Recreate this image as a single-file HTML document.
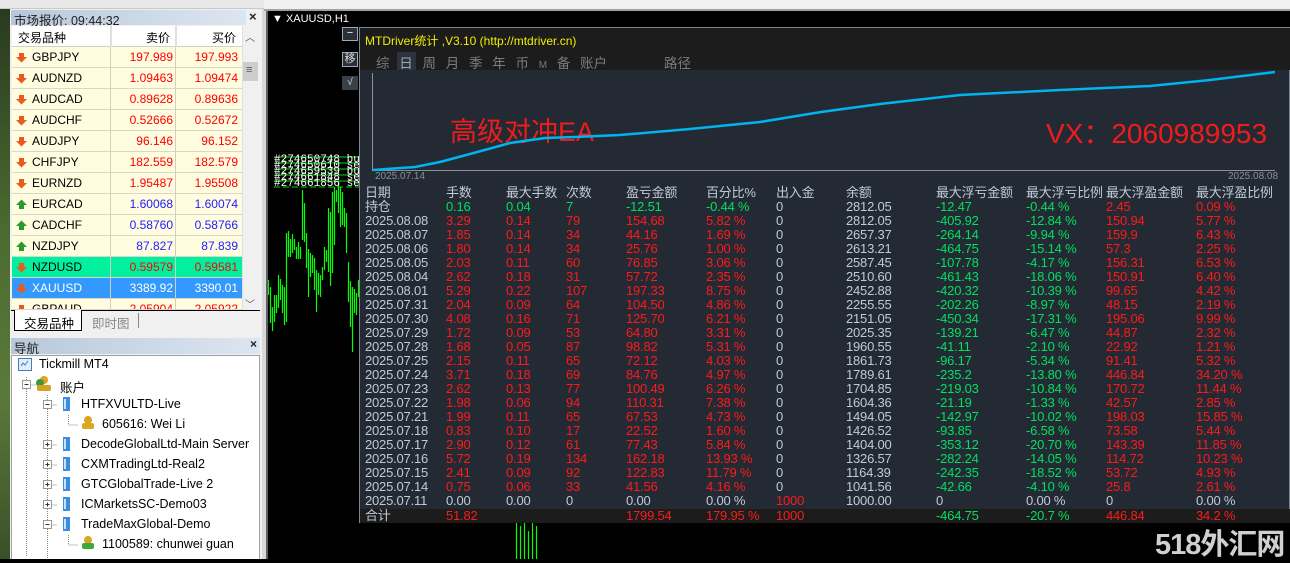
<!DOCTYPE html>
<html><head><meta charset="utf-8">
<style>
*{margin:0;padding:0;box-sizing:border-box}
body{width:1290px;height:559px;overflow:hidden;background:#000;font-family:"Liberation Sans","Noto Sans CJK SC",sans-serif;position:relative}
.a{position:absolute;white-space:nowrap}
.lp{position:absolute;left:0;top:0;width:264px;height:559px;background:#f0f0f0}
.mw{font-size:12px;color:#000}
.row{position:absolute;left:12px;width:230px;height:21px;background:#fffce0;border-bottom:1px solid #d8d8c8}
.row .n{position:absolute;left:20px;top:3px}
.row .b{position:absolute;right:69px;top:3px;color:#f00}
.row .k{position:absolute;right:4px;top:3px;color:#f00}
.row.u .b,.row.u .k{color:#2020ff}
.ar{position:absolute;left:4px;top:5px;width:11px;height:11px}
.vl{position:absolute;top:0;width:1px;height:21px;background:#d0d0c0}
.tr{font-size:12.5px;color:#000}
.pn{position:absolute;left:359px;top:27px;width:931px;height:496px;border:1px solid #7c8594;background:#232a33;font-size:13px;color:#c0cad8}
.pn .r{position:absolute;left:0;width:930px;height:14px;line-height:14px}
.pn .r span{position:absolute;top:0;letter-spacing:-0.2px}
.g{color:#00e060}.d{color:#ff1a1a}.w{color:#c0cad8}
.c1{left:5px}.c2{left:86px}.c3{left:146px}.c4{left:206px}.c5{left:266px}.c6{left:346px}.c7{left:416px}.c8{left:486px}.c9{left:576px}.c10{left:666px}.c11{left:746px}.c12{left:836px}
</style></head><body>

<!-- left panel -->
<div class="lp">
  <div class="a" style="left:0;top:0;width:264px;height:9px;background:#e8e8e8;border-bottom:1px solid #c8c8c8"></div>
  <div class="a" style="left:0;top:9px;width:10px;height:550px;background:linear-gradient(#2a3a20,#4a6a30 40%,#5a7a3a 70%,#3a5028)"></div>
  <!-- market watch title -->
  <div class="a" style="left:11px;top:10px;width:235px;height:15px;background:linear-gradient(90deg,#b8c8da,#dce6f0)"></div>
  <div class="a mw" style="left:14px;top:10px;font-size:12.5px;color:#222">市场报价: 09:44:32</div>
  <div class="a" style="left:249px;top:9px;font-size:13px;font-weight:bold;color:#222">×</div>
  <!-- header -->
  <div class="a" style="left:12px;top:26px;width:230px;height:21px;background:#fff;border-bottom:1px solid #d0d0d0"></div>
  <div class="a" style="left:110px;top:26px;width:2px;height:21px;background:#e0e0e0"></div>
  <div class="a" style="left:175px;top:26px;width:2px;height:21px;background:#e0e0e0"></div>
  <div class="a mw" style="left:18px;top:29px">交易品种</div>
  <div class="a mw" style="left:146px;top:29px">卖价</div>
  <div class="a mw" style="left:212px;top:29px">买价</div>
  <!-- rows -->
  <div class="mw">
  <div class="row" style="top:47px"><svg class="ar" viewBox="0 0 11 11"><path d="M3 1h5v4h3l-5.5 5.5L0 5h3z" fill="#e85a20"/></svg><span class="n">GBPJPY</span><span class="b">197.989</span><span class="k">197.993</span><i class="vl" style="left:98px"></i><i class="vl" style="left:163px"></i></div>
  <div class="row" style="top:68px"><svg class="ar" viewBox="0 0 11 11"><path d="M3 1h5v4h3l-5.5 5.5L0 5h3z" fill="#e85a20"/></svg><span class="n">AUDNZD</span><span class="b">1.09463</span><span class="k">1.09474</span><i class="vl" style="left:98px"></i><i class="vl" style="left:163px"></i></div>
  <div class="row" style="top:89px"><svg class="ar" viewBox="0 0 11 11"><path d="M3 1h5v4h3l-5.5 5.5L0 5h3z" fill="#e85a20"/></svg><span class="n">AUDCAD</span><span class="b">0.89628</span><span class="k">0.89636</span><i class="vl" style="left:98px"></i><i class="vl" style="left:163px"></i></div>
  <div class="row" style="top:110px"><svg class="ar" viewBox="0 0 11 11"><path d="M3 1h5v4h3l-5.5 5.5L0 5h3z" fill="#e85a20"/></svg><span class="n">AUDCHF</span><span class="b">0.52666</span><span class="k">0.52672</span><i class="vl" style="left:98px"></i><i class="vl" style="left:163px"></i></div>
  <div class="row" style="top:131px"><svg class="ar" viewBox="0 0 11 11"><path d="M3 1h5v4h3l-5.5 5.5L0 5h3z" fill="#e85a20"/></svg><span class="n">AUDJPY</span><span class="b">96.146</span><span class="k">96.152</span><i class="vl" style="left:98px"></i><i class="vl" style="left:163px"></i></div>
  <div class="row" style="top:152px"><svg class="ar" viewBox="0 0 11 11"><path d="M3 1h5v4h3l-5.5 5.5L0 5h3z" fill="#e85a20"/></svg><span class="n">CHFJPY</span><span class="b">182.559</span><span class="k">182.579</span><i class="vl" style="left:98px"></i><i class="vl" style="left:163px"></i></div>
  <div class="row" style="top:173px"><svg class="ar" viewBox="0 0 11 11"><path d="M3 1h5v4h3l-5.5 5.5L0 5h3z" fill="#e85a20"/></svg><span class="n">EURNZD</span><span class="b">1.95487</span><span class="k">1.95508</span><i class="vl" style="left:98px"></i><i class="vl" style="left:163px"></i></div>
  <div class="row u" style="top:194px"><svg class="ar" viewBox="0 0 11 11"><path d="M3 10h5V6h3L5.5 0.5 0 6h3z" fill="#2a9a2a"/></svg><span class="n">EURCAD</span><span class="b">1.60068</span><span class="k">1.60074</span><i class="vl" style="left:98px"></i><i class="vl" style="left:163px"></i></div>
  <div class="row u" style="top:215px"><svg class="ar" viewBox="0 0 11 11"><path d="M3 10h5V6h3L5.5 0.5 0 6h3z" fill="#2a9a2a"/></svg><span class="n">CADCHF</span><span class="b">0.58760</span><span class="k">0.58766</span><i class="vl" style="left:98px"></i><i class="vl" style="left:163px"></i></div>
  <div class="row u" style="top:236px"><svg class="ar" viewBox="0 0 11 11"><path d="M3 10h5V6h3L5.5 0.5 0 6h3z" fill="#2a9a2a"/></svg><span class="n">NZDJPY</span><span class="b">87.827</span><span class="k">87.839</span><i class="vl" style="left:98px"></i><i class="vl" style="left:163px"></i></div>
  <div class="row" style="top:257px;background:#00f0a0"><svg class="ar" viewBox="0 0 11 11"><path d="M3 1h5v4h3l-5.5 5.5L0 5h3z" fill="#e85a20"/></svg><span class="n">NZDUSD</span><span class="b">0.59579</span><span class="k">0.59581</span><i class="vl" style="left:98px"></i><i class="vl" style="left:163px"></i></div>
  <div class="row" style="top:278px;background:#3399ff"><svg class="ar" viewBox="0 0 11 11"><path d="M3 1h5v4h3l-5.5 5.5L0 5h3z" fill="#e85a20"/></svg><span class="n" style="color:#fff">XAUUSD</span><span class="b" style="color:#fff">3389.92</span><span class="k" style="color:#fff">3390.01</span><i class="vl" style="left:98px"></i><i class="vl" style="left:163px"></i></div>
  <div class="row" style="top:299px;height:11px;overflow:hidden"><svg class="ar" viewBox="0 0 11 11"><path d="M3 1h5v4h3l-5.5 5.5L0 5h3z" fill="#e85a20"/></svg><span class="n">GBPAUD</span><span class="b">2.05904</span><span class="k">2.05922</span><i class="vl" style="left:98px"></i><i class="vl" style="left:163px"></i></div>
  </div>
  <!-- scrollbar -->
  <div class="a" style="left:242px;top:26px;width:17px;height:284px;background:#f0f0f0;border-left:1px solid #e0e0e0"></div>
  <div class="a" style="left:245px;top:29px;font-size:10px;color:#555">︿</div>
  <div class="a" style="left:243px;top:62px;width:15px;height:19px;background:#cdcdcd"></div>
  <div class="a" style="left:246px;top:64px;font-size:11px;color:#555">≡</div>
  <div class="a" style="left:245px;top:296px;font-size:10px;color:#555">﹀</div>
  <!-- tabs -->
  <div class="a" style="left:11px;top:310px;width:249px;height:24px;background:#f0f0f0;border-top:1px solid #000"></div>
  <div class="a" style="left:14px;top:310px;width:68px;height:21px;background:#fff;border:1px solid #000;border-top:none"></div>
  <div class="a tr" style="left:24px;top:313px">交易品种</div>
  <div class="a tr" style="left:92px;top:313px;color:#888">即时图</div>
  <div class="a" style="left:138px;top:313px;width:1px;height:15px;background:#888"></div>
  <!-- navigator -->
  <div class="a" style="left:11px;top:338px;width:249px;height:16px;background:linear-gradient(90deg,#b8c8da,#dce6f0)"></div>
  <div class="a tr" style="left:14px;top:338px;color:#222">导航</div>
  <div class="a" style="left:250px;top:337px;font-size:12px;font-weight:bold;color:#222">×</div>
  <div class="a" style="left:11px;top:355px;width:249px;height:204px;background:#fff;border:1px solid #a0a0a0;border-bottom:none"></div>
  <svg class="a" style="left:11px;top:355px" width="250" height="204">
    <g stroke="#888" stroke-dasharray="1 1" fill="none">
      <path d="M15.5 22v180M15.5 30h10M36.5 40v170M36.5 50h10M36.5 90h10M36.5 110h10M36.5 130h10M36.5 150h10M36.5 170h10M57.5 60v10h10M57.5 180v10h10"/>
    </g>
    <g fill="#fff" stroke="#999"><rect x="11.5" y="25.5" width="8" height="8"/><rect x="32.5" y="45.5" width="8" height="8"/><rect x="32.5" y="85.5" width="8" height="8"/><rect x="32.5" y="105.5" width="8" height="8"/><rect x="32.5" y="125.5" width="8" height="8"/><rect x="32.5" y="145.5" width="8" height="8"/><rect x="32.5" y="165.5" width="8" height="8"/></g>
    <g stroke="#333"><path d="M13.5 29.5h4M34.5 49.5h4M34.5 169.5h4M34.5 89.5h4M36.5 87.5v4M34.5 109.5h4M36.5 107.5v4M34.5 129.5h4M36.5 127.5v4M34.5 149.5h4M36.5 147.5v4"/></g>
    <!-- tickmill icon -->
    <rect x="7.5" y="3.5" width="13" height="12" fill="#dfeefc" stroke="#4a7ab8"/><path d="M10 11l2-3 2 2 3-4" stroke="#4a7ab8" fill="none"/>
    <!-- accounts icon -->
    <circle cx="33" cy="25" r="4" fill="#e0a020"/><circle cx="29" cy="28" r="4" fill="#3a9a3a"/><rect x="26" y="30" width="14" height="6" rx="2" fill="#d8a020"/>
    <!-- servers -->
    <g fill="#3a8ee0"><rect x="52" y="42" width="7" height="14"/><rect x="52" y="82" width="7" height="14"/><rect x="52" y="102" width="7" height="14"/><rect x="52" y="122" width="7" height="14"/><rect x="52" y="142" width="7" height="14"/><rect x="52" y="162" width="7" height="14"/></g>
    <g fill="#c9e4ff"><rect x="53" y="44" width="2" height="10"/><rect x="53" y="84" width="2" height="10"/><rect x="53" y="104" width="2" height="10"/><rect x="53" y="124" width="2" height="10"/><rect x="53" y="144" width="2" height="10"/><rect x="53" y="164" width="2" height="10"/></g>
    <circle cx="77" cy="65" r="4" fill="#d8a820"/><rect x="71" y="68" width="12" height="6" rx="2" fill="#d8a820"/>
    <circle cx="77" cy="185" r="4" fill="#d8a820"/><rect x="71" y="188" width="12" height="6" rx="2" fill="#3aaa3a"/>
  </svg>
  <div class="tr">
  <div class="a" style="left:39px;top:357px">Tickmill MT4</div>
  <div class="a" style="left:60px;top:377px">账户</div>
  <div class="a" style="left:81px;top:397px">HTFXVULTD-Live</div>
  <div class="a" style="left:102px;top:417px">605616: Wei Li</div>
  <div class="a" style="left:81px;top:437px">DecodeGlobalLtd-Main Server</div>
  <div class="a" style="left:81px;top:457px">CXMTradingLtd-Real2</div>
  <div class="a" style="left:81px;top:477px">GTCGlobalTrade-Live 2</div>
  <div class="a" style="left:81px;top:497px">ICMarketsSC-Demo03</div>
  <div class="a" style="left:81px;top:517px">TradeMaxGlobal-Demo</div>
  <div class="a" style="left:102px;top:537px">1100589: chunwei guan</div>
  </div>
</div>
<div class="a" style="left:262px;top:9px;width:4px;height:550px;background:#d8d8d8"></div>
<div class="a" style="left:266px;top:9px;width:2px;height:550px;background:#606060"></div>
<div class="a" style="left:264px;top:9px;width:1026px;height:2px;background:#a0a0a0"></div>
<div class="a" style="left:264px;top:0;width:1026px;height:9px;background:#f0f0f0"></div>

<!-- chart -->
<svg class="a" style="left:268px;top:11px" width="1022" height="548">
  <g stroke="#00ff00" stroke-width="1.2">
  <path d="M0.5 269v15M2.5 276v36M4.5 296v24M6.5 284v27M8.5 284v18M10.5 264v33M12.5 268v21M14.5 274v28M16.5 276v38M18.5 222v89M20.5 220v26M22.5 228v18M24.5 223v19M26.5 228v11M28.5 236v12M30.5 231v17M32.5 236v12M34.5 179v50M36.5 192v39M38.5 222v35M40.5 238v48M42.5 242v24M44.5 244v18M46.5 247v32M48.5 259v42M50.5 262v22M52.5 264v22M54.5 256v13M56.5 236v23M58.5 239v12M60.5 197v64M62.5 201v74M64.5 181v81M66.5 176v58M68.5 179v12M70.5 172v30M72.5 176v40M74.5 181v33M76.5 197v19M78.5 202v40M80.5 251v40M82.5 270v46M84.5 276v65M86.5 278v24M88.5 282v22M90.5 269v17"/>
  <path d="M248.5 511v37M252.5 515v33M256.5 511v37M260.5 520v28M264.5 511v37M268.5 515v33"/>
  </g>
  <g stroke="#00dd00"><path d="M6 146h85M6 152h85M6 158h85M6 164h85M6 170h85"/><path d="M6 176h85" stroke-dasharray="6 3"/></g>
  <g font-family="Liberation Mono,monospace" font-size="11" fill="#fff">
    <text x="6" y="151">#274650748 buy 0.0</text><text x="6" y="157">#274650610 sell 0.0</text><text x="6" y="163">#274659539 buy 0.0</text><text x="6" y="169">#274661848 sell 0.0</text><text x="6" y="175">#274661856 sell stop</text>
  </g>
</svg>
<div class="a" style="left:272px;top:13px;font-size:11px;color:#fff">▼ XAUUSD,H1</div>
<div class="a" style="left:342px;top:27px;width:16px;height:14px;border:1px solid #a0a8b8;background:#2a3038;color:#fff;font-size:11px;line-height:11px;text-align:center">−</div>
<div class="a" style="left:342px;top:52px;width:16px;height:15px;border:1px solid #a0a8b8;background:#2a3038;color:#ddd;font-size:11px;line-height:13px;text-align:center">移</div>
<div class="a" style="left:342px;top:76px;width:16px;height:14px;background:#3a4048;color:#ddd;font-size:10px;line-height:14px;text-align:center">√</div>

<!-- panel -->
<div class="pn">
  <div class="a" style="left:0;top:0;width:930px;height:42px;background:#1c1c1c"></div>
  <div class="a" style="left:5px;top:4px;color:#f0f000;font-size:12px">MTDriver统计 ,V3.10 (http://mtdriver.cn)</div>
  <div class="a" style="left:37px;top:24px;width:19px;height:18px;background:#2c333c"></div>
  <div class="a" style="left:16px;top:24px;color:#7c7c7c;font-size:13.5px;word-spacing:6px">综 <span style="color:#a0a8b4">日</span> 周 月 季 年 币 <span style="font-size:10px">M</span> 备 账户</div>
  <div class="a" style="left:304px;top:24px;color:#7c7c7c;font-size:13.5px">路径</div>
  <div class="a" style="left:12px;top:45px;width:1px;height:98px;background:#8a9099"></div>
  <div class="a" style="left:12px;top:142px;width:903px;height:1px;background:#8a9099"></div>
  <div class="a" style="left:15px;top:143px;font-size:10px;color:#8a9099">2025.07.14</div>
  <div class="a" style="left:868px;top:143px;font-size:10px;color:#8a9099">2025.08.08</div>
  <div class="a" style="left:90px;top:82px;font-size:27px;color:#ee1c1c">高级对冲EA</div>
  <div class="a" style="left:686px;top:84px;font-size:28px;color:#ee1c1c">VX：2060989953</div>
  <svg class="a" style="left:0;top:0" width="930" height="160"><polyline fill="none" stroke="#00b4f0" stroke-width="2.5" points="13,142 55,139 80,134 110,126 150,115 185,110 215,109 260,107 330,101 400,94 461,84 520,76 600,67 700,62 790,58 850,52 915,44"/></svg>
  <div class="r" style="top:158px"><span class="c1">日期</span><span class="c2">手数</span><span class="c3">最大手数</span><span class="c4">次数</span><span class="c5">盈亏金额</span><span class="c6">百分比%</span><span class="c7">出入金</span><span class="c8">余额</span><span class="c9">最大浮亏金额</span><span class="c10">最大浮亏比例</span><span class="c11">最大浮盈金额</span><span class="c12">最大浮盈比例</span></div>
  <div class="r" style="top:172px"><span class="c1">持仓</span><span class="c2 g">0.16</span><span class="c3 g">0.04</span><span class="c4 g">7</span><span class="c5 g">-12.51</span><span class="c6 g">-0.44 %</span><span class="c7">0</span><span class="c8">2812.05</span><span class="c9 g">-12.47</span><span class="c10 g">-0.44 %</span><span class="c11 d">2.45</span><span class="c12 d">0.09 %</span></div>
  <div class="r" style="top:186px"><span class="c1">2025.08.08</span><span class="c2 d">3.29</span><span class="c3 d">0.14</span><span class="c4 d">79</span><span class="c5 d">154.68</span><span class="c6 d">5.82 %</span><span class="c7">0</span><span class="c8">2812.05</span><span class="c9 g">-405.92</span><span class="c10 g">-12.84 %</span><span class="c11 d">150.94</span><span class="c12 d">5.77 %</span></div>
  <div class="r" style="top:200px"><span class="c1">2025.08.07</span><span class="c2 d">1.85</span><span class="c3 d">0.14</span><span class="c4 d">34</span><span class="c5 d">44.16</span><span class="c6 d">1.69 %</span><span class="c7">0</span><span class="c8">2657.37</span><span class="c9 g">-264.14</span><span class="c10 g">-9.94 %</span><span class="c11 d">159.9</span><span class="c12 d">6.43 %</span></div>
  <div class="r" style="top:214px"><span class="c1">2025.08.06</span><span class="c2 d">1.80</span><span class="c3 d">0.14</span><span class="c4 d">34</span><span class="c5 d">25.76</span><span class="c6 d">1.00 %</span><span class="c7">0</span><span class="c8">2613.21</span><span class="c9 g">-464.75</span><span class="c10 g">-15.14 %</span><span class="c11 d">57.3</span><span class="c12 d">2.25 %</span></div>
  <div class="r" style="top:228px"><span class="c1">2025.08.05</span><span class="c2 d">2.03</span><span class="c3 d">0.11</span><span class="c4 d">60</span><span class="c5 d">76.85</span><span class="c6 d">3.06 %</span><span class="c7">0</span><span class="c8">2587.45</span><span class="c9 g">-107.78</span><span class="c10 g">-4.17 %</span><span class="c11 d">156.31</span><span class="c12 d">6.53 %</span></div>
  <div class="r" style="top:242px"><span class="c1">2025.08.04</span><span class="c2 d">2.62</span><span class="c3 d">0.18</span><span class="c4 d">31</span><span class="c5 d">57.72</span><span class="c6 d">2.35 %</span><span class="c7">0</span><span class="c8">2510.60</span><span class="c9 g">-461.43</span><span class="c10 g">-18.06 %</span><span class="c11 d">150.91</span><span class="c12 d">6.40 %</span></div>
  <div class="r" style="top:256px"><span class="c1">2025.08.01</span><span class="c2 d">5.29</span><span class="c3 d">0.22</span><span class="c4 d">107</span><span class="c5 d">197.33</span><span class="c6 d">8.75 %</span><span class="c7">0</span><span class="c8">2452.88</span><span class="c9 g">-420.32</span><span class="c10 g">-10.39 %</span><span class="c11 d">99.65</span><span class="c12 d">4.42 %</span></div>
  <div class="r" style="top:270px"><span class="c1">2025.07.31</span><span class="c2 d">2.04</span><span class="c3 d">0.09</span><span class="c4 d">64</span><span class="c5 d">104.50</span><span class="c6 d">4.86 %</span><span class="c7">0</span><span class="c8">2255.55</span><span class="c9 g">-202.26</span><span class="c10 g">-8.97 %</span><span class="c11 d">48.15</span><span class="c12 d">2.19 %</span></div>
  <div class="r" style="top:284px"><span class="c1">2025.07.30</span><span class="c2 d">4.08</span><span class="c3 d">0.16</span><span class="c4 d">71</span><span class="c5 d">125.70</span><span class="c6 d">6.21 %</span><span class="c7">0</span><span class="c8">2151.05</span><span class="c9 g">-450.34</span><span class="c10 g">-17.31 %</span><span class="c11 d">195.06</span><span class="c12 d">9.99 %</span></div>
  <div class="r" style="top:298px"><span class="c1">2025.07.29</span><span class="c2 d">1.72</span><span class="c3 d">0.09</span><span class="c4 d">53</span><span class="c5 d">64.80</span><span class="c6 d">3.31 %</span><span class="c7">0</span><span class="c8">2025.35</span><span class="c9 g">-139.21</span><span class="c10 g">-6.47 %</span><span class="c11 d">44.87</span><span class="c12 d">2.32 %</span></div>
  <div class="r" style="top:312px"><span class="c1">2025.07.28</span><span class="c2 d">1.68</span><span class="c3 d">0.05</span><span class="c4 d">87</span><span class="c5 d">98.82</span><span class="c6 d">5.31 %</span><span class="c7">0</span><span class="c8">1960.55</span><span class="c9 g">-41.11</span><span class="c10 g">-2.10 %</span><span class="c11 d">22.92</span><span class="c12 d">1.21 %</span></div>
  <div class="r" style="top:326px"><span class="c1">2025.07.25</span><span class="c2 d">2.15</span><span class="c3 d">0.11</span><span class="c4 d">65</span><span class="c5 d">72.12</span><span class="c6 d">4.03 %</span><span class="c7">0</span><span class="c8">1861.73</span><span class="c9 g">-96.17</span><span class="c10 g">-5.34 %</span><span class="c11 d">91.41</span><span class="c12 d">5.32 %</span></div>
  <div class="r" style="top:340px"><span class="c1">2025.07.24</span><span class="c2 d">3.71</span><span class="c3 d">0.18</span><span class="c4 d">69</span><span class="c5 d">84.76</span><span class="c6 d">4.97 %</span><span class="c7">0</span><span class="c8">1789.61</span><span class="c9 g">-235.2</span><span class="c10 g">-13.80 %</span><span class="c11 d">446.84</span><span class="c12 d">34.20 %</span></div>
  <div class="r" style="top:354px"><span class="c1">2025.07.23</span><span class="c2 d">2.62</span><span class="c3 d">0.13</span><span class="c4 d">77</span><span class="c5 d">100.49</span><span class="c6 d">6.26 %</span><span class="c7">0</span><span class="c8">1704.85</span><span class="c9 g">-219.03</span><span class="c10 g">-10.84 %</span><span class="c11 d">170.72</span><span class="c12 d">11.44 %</span></div>
  <div class="r" style="top:368px"><span class="c1">2025.07.22</span><span class="c2 d">1.98</span><span class="c3 d">0.06</span><span class="c4 d">94</span><span class="c5 d">110.31</span><span class="c6 d">7.38 %</span><span class="c7">0</span><span class="c8">1604.36</span><span class="c9 g">-21.19</span><span class="c10 g">-1.33 %</span><span class="c11 d">42.57</span><span class="c12 d">2.85 %</span></div>
  <div class="r" style="top:382px"><span class="c1">2025.07.21</span><span class="c2 d">1.99</span><span class="c3 d">0.11</span><span class="c4 d">65</span><span class="c5 d">67.53</span><span class="c6 d">4.73 %</span><span class="c7">0</span><span class="c8">1494.05</span><span class="c9 g">-142.97</span><span class="c10 g">-10.02 %</span><span class="c11 d">198.03</span><span class="c12 d">15.85 %</span></div>
  <div class="r" style="top:396px"><span class="c1">2025.07.18</span><span class="c2 d">0.83</span><span class="c3 d">0.10</span><span class="c4 d">17</span><span class="c5 d">22.52</span><span class="c6 d">1.60 %</span><span class="c7">0</span><span class="c8">1426.52</span><span class="c9 g">-93.85</span><span class="c10 g">-6.58 %</span><span class="c11 d">73.58</span><span class="c12 d">5.44 %</span></div>
  <div class="r" style="top:410px"><span class="c1">2025.07.17</span><span class="c2 d">2.90</span><span class="c3 d">0.12</span><span class="c4 d">61</span><span class="c5 d">77.43</span><span class="c6 d">5.84 %</span><span class="c7">0</span><span class="c8">1404.00</span><span class="c9 g">-353.12</span><span class="c10 g">-20.70 %</span><span class="c11 d">143.39</span><span class="c12 d">11.85 %</span></div>
  <div class="r" style="top:424px"><span class="c1">2025.07.16</span><span class="c2 d">5.72</span><span class="c3 d">0.19</span><span class="c4 d">134</span><span class="c5 d">162.18</span><span class="c6 d">13.93 %</span><span class="c7">0</span><span class="c8">1326.57</span><span class="c9 g">-282.24</span><span class="c10 g">-14.05 %</span><span class="c11 d">114.72</span><span class="c12 d">10.23 %</span></div>
  <div class="r" style="top:438px"><span class="c1">2025.07.15</span><span class="c2 d">2.41</span><span class="c3 d">0.09</span><span class="c4 d">92</span><span class="c5 d">122.83</span><span class="c6 d">11.79 %</span><span class="c7">0</span><span class="c8">1164.39</span><span class="c9 g">-242.35</span><span class="c10 g">-18.52 %</span><span class="c11 d">53.72</span><span class="c12 d">4.93 %</span></div>
  <div class="r" style="top:452px"><span class="c1">2025.07.14</span><span class="c2 d">0.75</span><span class="c3 d">0.06</span><span class="c4 d">33</span><span class="c5 d">41.56</span><span class="c6 d">4.16 %</span><span class="c7">0</span><span class="c8">1041.56</span><span class="c9 g">-42.66</span><span class="c10 g">-4.10 %</span><span class="c11 d">25.8</span><span class="c12 d">2.61 %</span></div>
  <div class="r" style="top:466px"><span class="c1">2025.07.11</span><span class="c2">0.00</span><span class="c3">0.00</span><span class="c4">0</span><span class="c5">0.00</span><span class="c6">0.00 %</span><span class="c7 d">1000</span><span class="c8">1000.00</span><span class="c9">0</span><span class="c10">0.00 %</span><span class="c11">0</span><span class="c12">0.00 %</span></div>
  <div class="a" style="left:0;top:481px;width:930px;height:14px;background:#1c1c1c"></div>
  <div class="r" style="top:481px"><span class="c1">合计</span><span class="c2 d">51.82</span><span class="c5 d">1799.54</span><span class="c6 d">179.95 %</span><span class="c7 d">1000</span><span class="c9 g">-464.75</span><span class="c10 g">-20.7 %</span><span class="c11 d">446.84</span><span class="c12 d">34.2 %</span></div>
</div>
<div class="a" style="left:1155px;top:521px;font-size:29px;font-weight:bold;color:#d0d0d0;letter-spacing:-1px">518外汇网</div>
</body></html>
